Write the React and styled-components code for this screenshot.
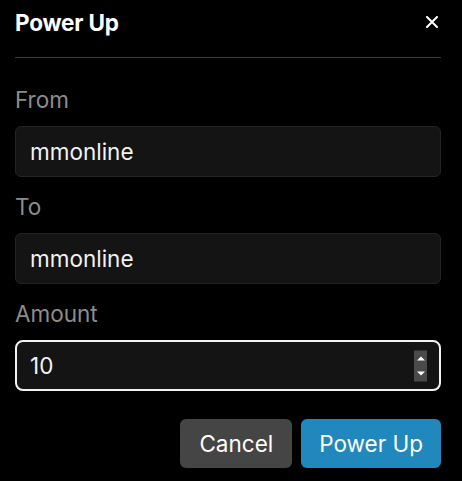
import React from 'react'
import styled, { createGlobalStyle } from 'styled-components'

const Global = createGlobalStyle`
  html, body {
    margin: 0;
    background: #000;
  }
  body {
    font-family: Inter, "Noto Sans", sans-serif;
    color: #fff;
  }
`

const Dialog = styled.div`
  width: 462px;
  height: 481px;
  box-sizing: border-box;
  padding: 0 21px 0 15px;
  display: flex;
  flex-direction: column;
`
const Header = styled.div`
  height: 44px;
  display: flex;
  align-items: center;
  justify-content: space-between;
  border-bottom: 1px solid #3a3a3a;
  padding-bottom: 13px;
  box-sizing: content-box;
`
const Title = styled.h2`
  margin: 0;
  font-size: 22.5px;
  font-weight: 700;
  letter-spacing: -0.2px;
`
const Close = styled.button`
  border: 0;
  background: none;
  padding: 0;
  margin-right: 2px;
  width: 14px;
  height: 14px;
  display: flex;
  align-items: center;
  justify-content: center;
  cursor: pointer;
`
const Body = styled.div`
  padding-top: 28px;
  display: flex;
  flex-direction: column;
  gap: 16px;
`
const Field = styled.div`
  display: flex;
  flex-direction: column;
  gap: 12px;
`
const Label = styled.label`
  font-size: 22.5px;
  line-height: 28px;
  color: #8c8c8c;
`
const InputBox = styled.div`
  position: relative;
  height: 51px;
  box-sizing: border-box;
  border-radius: ${p => (p.$focused ? '8px' : '6px')};
  border: ${p => (p.$focused ? '2px solid #f2f2f2' : '1px solid #232323')};
  background: #141414;
  display: flex;
  align-items: center;
  padding-left: ${p => (p.$focused ? '13px' : '14px')};
  font-size: 22.5px;
  color: #f2f2f2;
`
const Spinner = styled.div`
  position: absolute;
  right: 12px;
  top: 50%;
  transform: translateY(-50%);
  width: 13px;
  height: 31px;
  background: #4a4a4a;
  display: flex;
  flex-direction: column;
  align-items: center;
  justify-content: space-between;
  padding: 6px 0;
  box-sizing: border-box;
`
const Arrow = styled.div`
  width: 0;
  height: 0;
  border-left: 4px solid transparent;
  border-right: 4px solid transparent;
  ${p =>
    p.$up
      ? 'border-bottom: 4px solid #fff;'
      : 'border-top: 4px solid #fff;'}
`
const Actions = styled.div`
  margin-top: 28px;
  display: flex;
  justify-content: flex-end;
  gap: 9px;
`
const Button = styled.button`
  height: 49px;
  border: 0;
  border-radius: 6px;
  padding: 0 ${p => (p.$primary ? '18px' : '19px')};
  font-family: inherit;
  font-size: 22.5px;
  color: #fff;
  background: ${p => (p.$primary ? '#2088bd' : '#454545')};
  cursor: pointer;
`

export default function App() {
  return (
    <>
      <Global />
      <Dialog>
        <Header>
          <Title>Power Up</Title>
          <Close aria-label="Close">
            <svg width="12" height="12" viewBox="0 0 12 12">
              <path d="M1 1L11 11M11 1L1 11" stroke="#fff" strokeWidth="2" strokeLinecap="round" />
            </svg>
          </Close>
        </Header>
        <Body>
          <Field>
            <Label>From</Label>
            <InputBox>mmonline</InputBox>
          </Field>
          <Field>
            <Label>To</Label>
            <InputBox>mmonline</InputBox>
          </Field>
          <Field>
            <Label>Amount</Label>
            <InputBox $focused>
              10
              <Spinner>
                <Arrow $up />
                <Arrow />
              </Spinner>
            </InputBox>
          </Field>
        </Body>
        <Actions>
          <Button>Cancel</Button>
          <Button $primary>Power Up</Button>
        </Actions>
      </Dialog>
    </>
  )
}
